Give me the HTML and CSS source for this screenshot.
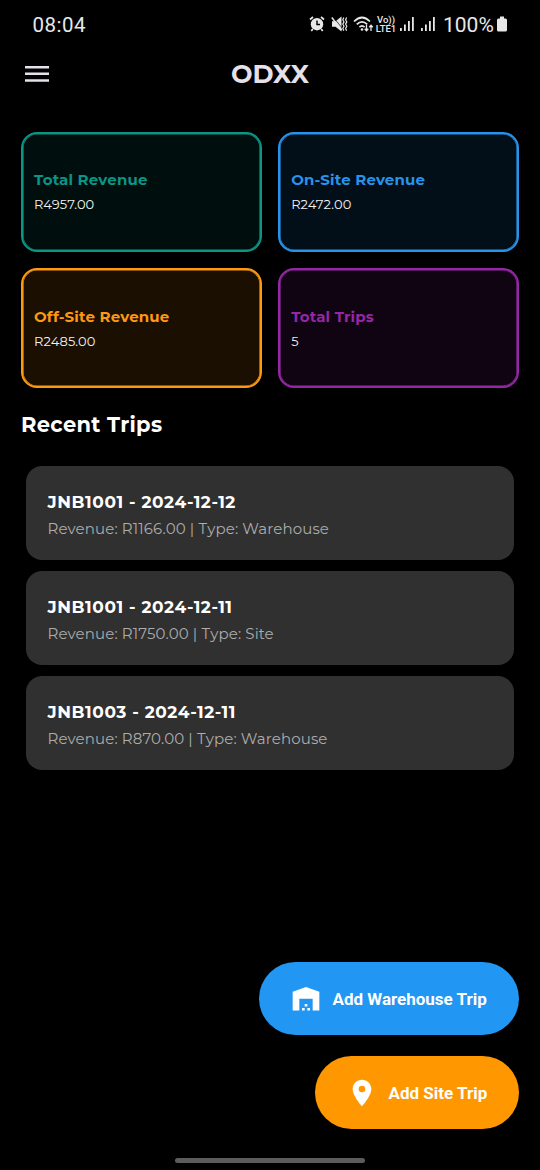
FILE: index.html
```html
<!DOCTYPE html>
<html lang="en">
<head>
<meta charset="utf-8">
<title>ODXX</title>
<link rel="stylesheet" href="styles.css">
</head>
<body>
<div class="screen">
  <header class="status">
    <span class="clock">08:04</span>
    <div class="indicators">
      <svg class="alarm" width="16" height="18" viewBox="0 0 16 18" fill="none" stroke="#e8e8e8"><circle cx="8" cy="9.2" r="6.2" fill="#e8e8e8" stroke="none"/><path d="M1 4.500 4 2M15 4.500 12 2M3.800 14l-1.500 2M12.200 14l1.500 2" stroke-width="1.700"/><path d="M8 5.500v4h3" stroke="#000" stroke-width="1.400"/></svg>
      <svg class="mute" width="17" height="18" viewBox="0 0 17 18" fill="#e8e8e8"><path d="M1 6.200h3.500L10.500 1.500v15l-6-4.700H1z"/><path d="M2.500 2.500 11.500 13.500" stroke="#000" stroke-width=".7"/><path d="M.8 2.500 10.500 15" stroke="#e8e8e8" stroke-width="1.500"/><path d="M12.800 2.500l-1 2.200 1.200 2.200-1.200 2.200 1.200 2.200-1.200 2.200 1 2.200M15.600 2.500l-1 2.200 1.200 2.200-1.200 2.200 1.200 2.200-1.200 2.200 1 2.200" fill="none" stroke="#e8e8e8" stroke-width="1.200"/></svg>
      <svg class="wifi" width="21" height="18" viewBox="0 0 21 18" fill="none" stroke="#e8e8e8" stroke-width="1.700"><path d="M1 6.500Q9 -1.500 17 6.500M3.800 9.400Q9 4.400 14.200 9.400M6.400 12.100Q9 9.600 11.600 12.100"/><circle cx="9" cy="14.500" r="1.300" fill="#e8e8e8" stroke="none"/><path d="M13.500 10v5.500M11.700 13.700l1.800 2 1.800-2M18 16v-5.500M16.200 12.300l1.800-2 1.800 2" stroke-width="1.300"/></svg>
      <span class="volte"><span>Vo))</span><span>LTE1</span></span>
      <svg class="signal" width="15" height="18" viewBox="0 0 15 18" fill="#e8e8e8"><path d="M0 13h1.800v3H0zM4 9.500h1.800V16H4zM8 6h1.800v10H8zM12 2h1.800v14H12z"/></svg>
      <svg class="signal second" width="15" height="18" viewBox="0 0 15 18" fill="#e8e8e8"><path d="M0 13h1.800v3H0zM4 9.500h1.800V16H4zM8 6h1.800v10H8zM12 2h1.800v14H12z"/></svg>
      <span class="percent">100%</span>
      <svg class="battery" width="12" height="18" viewBox="0 0 12 18" fill="#e8e8e8"><path d="M4 1.500h4v2h1.500Q11 3.500 11 5v10q0 1.500-1.500 1.500h-7Q1 16.500 1 15V5q0-1.500 1.500-1.500H4z"/></svg>
    </div>
  </header>
  <div class="appbar">
    <svg width="25" height="18" viewBox="0 0 25 18" fill="#e6e0e9"><path d="M0 1h24v2.500H0zM0 7.600h24v2.500H0zM0 14.200h24v2.500H0z"/></svg>
    <h1 class="title">ODXX</h1>
  </div>
  <main class="content">
    <section class="stats">
      <div class="stat teal"><h2 class="stat-label">Total Revenue</h2><p class="stat-value">R4957.00</p></div>
      <div class="stat blue"><h2 class="stat-label">On-Site Revenue</h2><p class="stat-value">R2472.00</p></div>
      <div class="stat orange"><h2 class="stat-label">Off-Site Revenue</h2><p class="stat-value">R2485.00</p></div>
      <div class="stat purple"><h2 class="stat-label">Total Trips</h2><p class="stat-value">5</p></div>
    </section>
    <h2 class="heading">Recent Trips</h2>
    <section class="trips">
      <article class="trip"><h3 class="trip-name">JNB1001 - 2024-12-12</h3><p class="trip-info">Revenue: R1166.00 | Type: Warehouse</p></article>
      <article class="trip"><h3 class="trip-name">JNB1001 - 2024-12-11</h3><p class="trip-info">Revenue: R1750.00 | Type: Site</p></article>
      <article class="trip"><h3 class="trip-name">JNB1003 - 2024-12-11</h3><p class="trip-info">Revenue: R870.00 | Type: Warehouse</p></article>
    </section>
  </main>
  <div class="actions">
    <button class="fab warehouse">
      <svg width="32" height="32" viewBox="0 0 24 24" fill="#fff"><path d="M22 18.800V6.500L12 3 2 6.500V20.700h5v-8.900h10v8.900h5zM11 18.700H9v2h2zM13 15.700h-2v2h2zM15 18.700h-2v2h2z"/></svg>
      <span>Add Warehouse Trip</span>
    </button>
    <button class="fab site">
      <svg width="32" height="32" viewBox="0 0 24 24" fill="#fff"><path d="M12 2C8.130 2 5 5.130 5 9c0 5.250 7 13 7 13s7-7.750 7-13c0-3.870-3.130-7-7-7zm0 9.500a2.500 2.500 0 1 1 0-5 2.500 2.500 0 0 1 0 5z"/></svg>
      <span>Add Site Trip</span>
    </button>
  </div>
  <div class="gesture"></div>
</div>
</body>
</html>
```

FILE: styles.css
```css
* { box-sizing: border-box; }
body { margin: 0; background: #000; }
h1, h2, h3, p { margin: 0; }
svg { display: block; flex: none; }
.screen { width: 540px; height: 1170px; background: #000; color: #fff; display: flex; flex-direction: column; overflow: hidden; font-family: Montserrat, Inter, sans-serif; }
.status { height: 48px; padding: 0 32px 0 32.500px; display: flex; justify-content: space-between; align-items: center; color: #e8e8e8; font-family: Roboto, sans-serif; }
.clock { font-size: 20.500px; letter-spacing: .5px; padding-top: 1px; }
.indicators { display: flex; align-items: center; }
.mute { margin-left: 6px; }
.wifi { margin-left: 5px; }
.volte { display: flex; flex-direction: column; align-items: center; width: 22px; margin-left: 1px; font-size: 9.500px; line-height: 9px; font-weight: 500; }
.signal { margin-left: 3px; }
.second { margin-left: 6px; }
.percent { font-size: 21px; margin-left: 7px; width: 51px; white-space: nowrap; padding-top: 1px; }
.battery { margin-left: 2px; }
.appbar { height: 52px; padding: 0 25px; display: grid; grid-template-columns: 25px 1fr 25px; align-items: center; }
.title { text-align: center; color: #e6e0e9; font-size: 25.500px; line-height: 32px; font-weight: 700; }
.content { flex: 1; padding: 32px 21px 0; }
.stats { display: grid; grid-template-columns: 1fr 1fr; grid-auto-rows: 120px; gap: 16.250px; }
.stat { border: 2px solid; box-shadow: inset 0 0 0 .6px currentColor; border-radius: 16px; padding: .500px 11px 0; display: flex; flex-direction: column; justify-content: center; gap: 5px; }
.teal { color: #0c9485; background: #000f0d; }
.blue { color: #2793eb; background: #030f18; }
.orange { color: #fe9910; background: #1a0f00; }
.purple { color: #9527a6; background: #100412; }
.stat-label { font-size: 15px; line-height: 20px; font-weight: 700; letter-spacing: .18px; }
.stat-value { color: #f2f2f2; font-size: 13px; line-height: 19px; letter-spacing: .1px; }
.heading { margin-top: 20.500px; font-size: 21px; line-height: 32px; font-weight: 700; letter-spacing: .33px; }
.trips { margin: 24.750px 5px 0; display: flex; flex-direction: column; gap: 10.500px; }
.trip { height: 94.500px; border-radius: 16px; background: #303030; padding: 23px 21.500px; }
.trip-name { font-size: 17px; line-height: 26px; font-weight: 700; letter-spacing: .55px; }
.trip-info { color: #acacac; font-size: 15px; line-height: 27px; font-weight: 400; letter-spacing: .13px; }
.actions { display: flex; flex-direction: column; align-items: flex-end; gap: 21px; padding-right: 21px; }
.fab { height: 73px; border: 0; border-radius: 37px; padding: 0 31px; display: flex; align-items: center; color: #fff; font: 700 17px/24px Roboto, sans-serif; white-space: nowrap; }
.fab span { padding-top: 1px; }
.warehouse { width: 260px; background: #2196f3; gap: 10.500px; }
.site { width: 204px; background: #ff9800; gap: 10.500px; }
.gesture { width: 190px; height: 5px; border-radius: 3px; background: #5c5c5c; margin: 29px auto 7px; }
```
